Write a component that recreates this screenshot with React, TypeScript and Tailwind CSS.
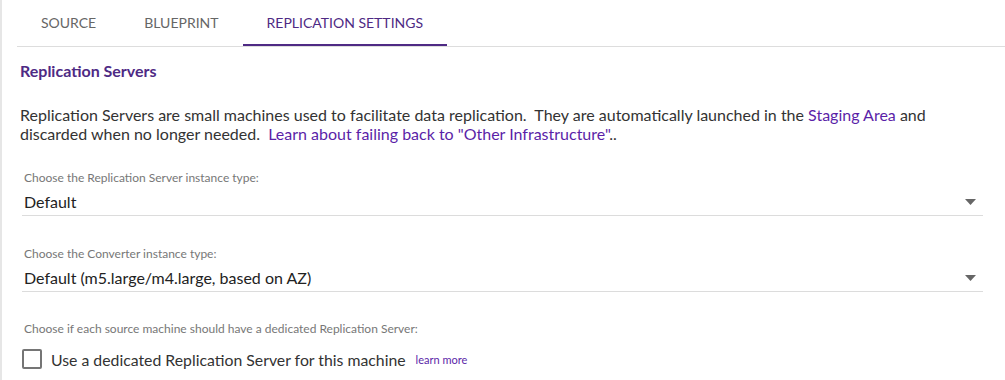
import React, { useState } from 'react';

const tabs = ['SOURCE', 'BLUEPRINT', 'REPLICATION SETTINGS'];

const SelectField = ({ label, value, className }: { label: string; value: string; className?: string }) => (
  <div className={`ml-[2px] w-[961px] ${className ?? ''}`}>
    <div className="pl-[2px] text-[12px] leading-[14px] text-[#777]">{label}</div>
    <div className="mt-[7px] flex items-center justify-between border-b border-[#dcdcdc] pb-[3px] pl-[2px] pr-[7px]">
      <span className="text-[16px] leading-[20px] text-[#222]">{value}</span>
      <svg width="11" height="6" viewBox="0 0 11 6" className="mb-[1px]">
        <path d="M0 0 L11 0 L5.5 6 Z" fill="#666" />
      </svg>
    </div>
  </div>
);

const App = () => {
  const [active, setActive] = useState(2); // replication settings tab selected
  const [dedicated, setDedicated] = useState(false);

  return (
    <div
      className="min-h-[380px] w-full border-l-2 border-[#e6e6e6] bg-white"
      style={{ fontFamily: 'Lato, "Noto Sans", sans-serif' }}
    >
      <div className="ml-[15px] flex border-b border-[#dddddd]">
        {tabs.map((tab, i) => (
          <button
            key={tab}
            onClick={() => setActive(i)}
            className={`flex h-[46px] items-center border-b-2 px-6 text-[14px] ${
              active === i ? 'border-[#4e2a84] text-[#4e2a84]' : 'border-transparent text-[#666]'
            }`}
          >
            {tab}
          </button>
        ))}
      </div>

      <div className="pl-[18px]">
        <h2 className="mt-[14px] text-[16px] font-bold leading-[20px] text-[#4e2a84]">Replication Servers</h2>

        <p className="mt-[24px] w-[930px] text-[16px] leading-[19px] text-[#333]">
          Replication Servers are small machines used to facilitate data replication.&nbsp; They are automatically
          launched in the <a className="text-[#5b1fa8]">Staging Area</a> and discarded when no longer needed.&nbsp;{' '}
          <a className="text-[#5b1fa8]">Learn about failing back to "Other Infrastructure"</a>..
        </p>

        <SelectField className="mt-[28px]" label="Choose the Replication Server instance type:" value="Default" />
        <SelectField
          className="mt-[31px]"
          label="Choose the Converter instance type:"
          value="Default (m5.large/m4.large, based on AZ)"
        />

        <div className="ml-[2px] mt-[30px] pl-[2px] text-[12px] leading-[14px] text-[#777]">
          Choose if each source machine should have a dedicated Replication Server:
        </div>

        <label className="mt-[11px] flex items-center">
          <span
            onClick={() => setDedicated(!dedicated)}
            className="ml-[2px] h-[20px] w-[20px] rounded-[2px] border-2 border-[#757575]"
          />
          <span className="ml-[9px] mt-[3px] text-[15.8px] leading-[20px] text-[#333]">
            Use a dedicated Replication Server for this machine
          </span>
          <a className="ml-[10px] mt-[4px] text-[11px] text-[#5b1fa8]">learn more</a>
        </label>
      </div>
    </div>
  );
};

export default App;
